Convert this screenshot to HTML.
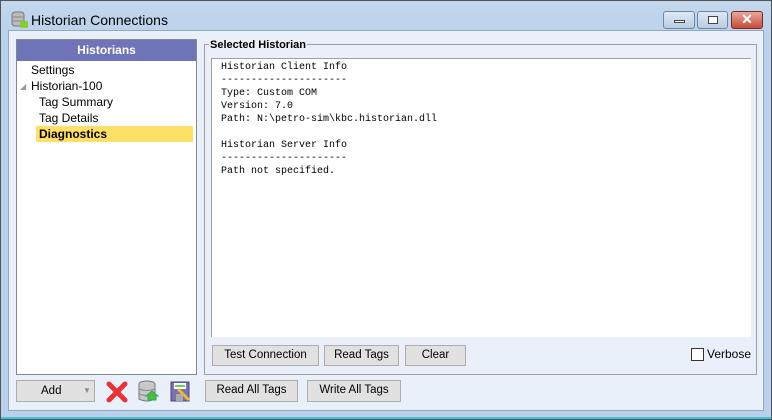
<!DOCTYPE html>
<html><head><style>
*{margin:0;padding:0;box-sizing:border-box}
body{width:772px;height:420px;overflow:hidden;font-family:"Liberation Sans",sans-serif;font-size:12px;color:#000;background:#fff}
.win{position:absolute;left:0;top:0;width:772px;height:420px;border:1px solid #555;background:linear-gradient(#c3d7ee,#b9d1ea 40px);}
.client{position:absolute;left:8px;top:30px;width:756px;height:381px;background:#e9f0f9;border:1px solid #8ea8c6}
.abs{position:absolute}
.btn{position:absolute;background:#e1e1e1;border:1px solid #adadad;text-align:center;font-size:11.5px;line-height:19px}
.tb{position:absolute;top:10px;height:18px;border:1px solid #6d86a6;border-radius:3px;background:linear-gradient(#dfe9f5,#b8cbe2)}
.mono{font-family:"Liberation Mono",monospace;font-size:10px;line-height:13px;white-space:pre;color:#000}
.tree div{position:absolute;font-size:12px;line-height:16px}
</style></head><body>
<div class="win">
 <svg class="abs" style="left:10px;top:10px" width="18" height="18"><rect x="1" y="1" width="12" height="14" rx="3" fill="#bbb" stroke="#777"/><line x1="1" y1="6" x2="13" y2="6" stroke="#888"/><line x1="1" y1="10" x2="13" y2="10" stroke="#888"/><rect x="9" y="10" width="8" height="7" fill="#8c3" rx="1"/></svg>
 <div class="abs" style="left:30px;top:11px;font-size:14px;color:#000">Historian Connections</div>
 <div class="tb" style="left:662px;width:32px"><div class="abs" style="left:10px;top:8px;width:11px;height:3px;background:#fff;border:1px solid #444"></div></div>
 <div class="tb" style="left:696px;width:31px"><div class="abs" style="left:10px;top:4px;width:10px;height:8px;border:1px solid #444;background:#fff"></div></div>
 <div class="tb" style="left:730px;width:32px;background:linear-gradient(#e9a99c,#c54a38);border-color:#7a2a22;color:#fff;text-align:center;font-weight:bold;font-size:14px;line-height:15px">✕</div>
</div>
<div class="client"></div>
<div class="abs" style="left:16px;top:39px;width:181px;height:336px;background:#fff;border:1px solid #828790"></div>
<div class="abs" style="left:17px;top:40px;width:179px;height:21px;background:#6f74b8;color:#fff;font-weight:bold;text-align:center;line-height:21px">Historians</div>
<div class="abs" style="left:36px;top:126px;width:157px;height:16px;background:#ffe066"></div>
<div class="tree">
 <div style="left:31px;top:62px">Settings</div>
 <div style="left:20px;top:79px;color:#999;font-size:8px">◢</div>
 <div style="left:31px;top:78px">Historian-100</div>
 <div style="left:39px;top:94px">Tag Summary</div>
 <div style="left:39px;top:110px">Tag Details</div>
 <div style="left:39px;top:126px;font-weight:bold">Diagnostics</div>
</div>
<div class="abs" style="left:204px;top:44px;width:553px;height:331px;border:1px solid #a0a0a0"></div>
<div class="abs" style="left:209px;top:38px;background:#e9f0f9;padding:0 1px;font-weight:bold;font-size:11px;line-height:14px">Selected Historian</div>
<div class="abs" style="left:211px;top:58px;width:540px;height:279px;background:#fff;border-top:1px solid #a0a0a0;border-left:1px solid #a0a0a0"></div>
<div class="abs mono" style="left:221px;top:61px">Historian Client Info
---------------------
Type: Custom COM
Version: 7.0
Path: N:\petro-sim\kbc.historian.dll

Historian Server Info
---------------------
Path not specified.</div>
<div class="btn" style="left:212px;top:345px;width:107px;height:21px">Test Connection</div>
<div class="btn" style="left:324px;top:345px;width:75px;height:21px">Read Tags</div>
<div class="btn" style="left:405px;top:345px;width:61px;height:21px">Clear</div>
<div class="abs" style="left:691px;top:348px;width:13px;height:13px;border:1px solid #333;background:#fff"></div>
<div class="abs" style="left:707px;top:347px">Verbose</div>
<div class="btn" style="left:16px;top:380px;width:79px;height:22px;text-align:left;padding-left:24px;line-height:20px">Add<span style="position:absolute;left:66px;top:0;color:#888;font-size:8px">▼</span></div>
<svg class="abs" style="left:106px;top:381px" width="22" height="22"><path d="M3 3L19 19M19 3L3 19" stroke="#e8323a" stroke-width="5" stroke-linecap="round"/></svg>
<svg class="abs" style="left:137px;top:380px" width="24" height="24"><ellipse cx="10" cy="4" rx="8" ry="3" fill="#ccc" stroke="#777"/><path d="M2 4V19Q10 23 18 19V4" fill="#c8c8c8" stroke="#777"/><path d="M2 9Q10 12 18 9M2 14Q10 17 18 14" fill="none" stroke="#888"/><path d="M11 20V16H9L15 11L21 16H19V20Z" fill="#5b3" stroke="#2a7"/></svg>
<svg class="abs" style="left:170px;top:381px" width="22" height="22"><rect x="1" y="1" width="18" height="19" fill="#7b6fae" stroke="#4b3f7e"/><rect x="4" y="2" width="12" height="6" fill="#fff"/><rect x="5" y="4" width="10" height="2" fill="#6c6"/><rect x="6" y="13" width="7" height="7" fill="#aaa"/><path d="M8 8L19 19" stroke="#e9b93a" stroke-width="3"/></svg>
<div class="btn" style="left:205px;top:380px;width:93px;height:22px">Read All Tags</div>
<div class="btn" style="left:307px;top:380px;width:94px;height:22px">Write All Tags</div>
<div class="abs" style="left:1px;top:417px;width:770px;height:2px;background:#3fc3d8"></div>
</body></html>
